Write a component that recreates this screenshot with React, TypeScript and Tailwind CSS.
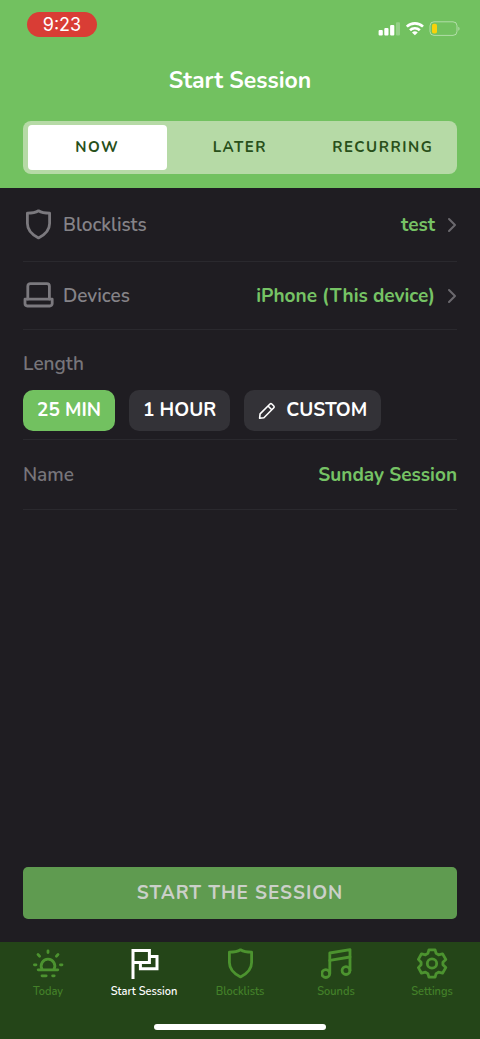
import React, { useState } from "react";
import { ChevronRight } from "lucide-react";

type IconProps = { className?: string };

function Icon({ className = "", children }: IconProps & { children: React.ReactNode }) {
  return (
    <svg
      viewBox="0 0 31 31"
      fill="none"
      stroke="currentColor"
      strokeWidth={2.8}
      strokeLinecap="round"
      strokeLinejoin="round"
      aria-hidden="true"
      className={`w-[31px] h-[31px] shrink-0 ${className}`}
    >
      {children}
    </svg>
  );
}

function ShieldIcon(props: IconProps) {
  return (
    <Icon {...props}>
      <path d="M15.5 1.8C12.5 3.6 8.6 4.2 4.4 4.2V14.5C4.4 20.5 8.8 25.6 15.5 28.9C22.2 25.6 26.6 20.5 26.6 14.5V4.2C22.4 4.2 18.5 3.6 15.5 1.8Z" />
    </Icon>
  );
}

function LaptopIcon(props: IconProps) {
  return (
    <Icon {...props}>
      <path d="M4.8 19V6.2a2.6 2.6 0 0 1 2.6-2.6H23.8a2.6 2.6 0 0 1 2.6 2.6V19" />
      <path d="M2 19.2H29.2V23.6a2.4 2.4 0 0 1-2.4 2.4H4.4A2.4 2.4 0 0 1 2 23.6Z" />
    </Icon>
  );
}

function SunriseIcon(props: IconProps) {
  return (
    <Icon {...props}>
      <path d="M5.2 21.8H24.8" />
      <path d="M9 21.2A6.8 6.8 0 1 1 21 21.2" />
      <path d="M15 2.8V4.6M5 6.6L6.6 8.2M25 6.6L23.4 8.2M1.4 16.8H3M27.4 16.8H29M9 27.8H13.2M19.6 27.8H21.2" />
    </Icon>
  );
}

function FlagIcon({ className = "" }: IconProps) {
  return (
    <svg
      viewBox="0 0 31 31"
      fill="none"
      stroke="currentColor"
      strokeWidth={3}
      strokeLinejoin="miter"
      aria-hidden="true"
      className={`w-[31px] h-[31px] shrink-0 ${className}`}
    >
      <path d="M4 31V2.4H20.4V14.4H4" />
      <path d="M20.4 8.4H28V20.8H11.4V14.4" />
    </svg>
  );
}

function MusicIcon(props: IconProps) {
  return (
    <Icon {...props}>
      <circle cx="4.8" cy="25.6" r="3.9" />
      <circle cx="25" cy="22.6" r="3.9" />
      <path d="M8.8 25.6V5L29 1.6V22.6" />
      <path d="M8.8 12.4L29 9" />
    </Icon>
  );
}

function GearIcon(props: IconProps) {
  return (
    <Icon {...props}>
      <circle cx="15" cy="15.5" r="4.7" />
      <path d="M11.9 1.8H18.1L19.1 5.4L21.5 6.8L25.5 5.8L28.8 11.4L25.9 14.2V16.8L28.8 19.6L25.5 25.2L21.5 24.2L19.1 25.6L18.1 29.2H11.9L10.9 25.6L8.5 24.2L4.5 25.2L1.4 19.6L4.1 16.8V14.2L1.4 11.4L4.5 5.8L8.5 6.8L10.9 5.4Z" />
    </Icon>
  );
}

function PencilIcon() {
  return (
    <svg viewBox="0 0 18 18" fill="none" stroke="currentColor" strokeWidth={1.6} strokeLinejoin="round" aria-hidden="true" className="w-[18px] h-[18px]">
      <path d="M1.6 16.2L2.1 11.9L12 2A1.3 1.3 0 0 1 13.8 2L15.8 4A1.3 1.3 0 0 1 15.8 5.8L5.9 15.7Z" />
      <path d="M10 4L13.8 7.8" />
    </svg>
  );
}

function StatusBar() {
  return (
    <div className="flex items-start justify-between pl-[27px] pr-5 pt-3">
      <div className="w-[70px] h-[25px] rounded-full bg-[#d93d35] text-white text-lg leading-[25px] text-center font-['Inter',sans-serif]">
        9:23
      </div>
      <svg viewBox="0 0 82 16" className="w-[82px] h-4 mt-2" aria-hidden="true">
        <g fill="#fff">
          <rect x="0.6" y="10" width="4.2" height="5.4" rx="1" />
          <rect x="6.3" y="8" width="4.2" height="7.4" rx="1" />
          <rect x="12.1" y="5" width="4.2" height="10.4" rx="1" />
          <rect x="18" y="2.3" width="4" height="13.1" rx="1" opacity="0.25" />
        </g>
        <g fill="none" stroke="#fff" strokeWidth="2.6">
          <path d="M28.8 6.6A11.7 11.7 0 0 1 45 6.6" />
          <path d="M32 10.2A7 7 0 0 1 41.8 10.2" />
        </g>
        <path d="M36.9 15.3L34 12.6A4.2 4.2 0 0 1 39.8 12.6Z" fill="#fff" />
        <rect x="52" y="1.8" width="27" height="13.6" rx="4" fill="none" stroke="#fff" strokeOpacity="0.45" />
        <rect x="54" y="3.8" width="5" height="9.8" rx="1.8" fill="#f8d20a" />
        <path d="M80.3 6.8C82 7.4 82 10.2 80.3 10.8Z" fill="#fff" opacity="0.45" />
      </svg>
    </div>
  );
}

const schedules = ["Now", "Later", "Recurring"];

const tabs = [
  { label: "Today", icon: SunriseIcon },
  { label: "Start Session", icon: FlagIcon },
  { label: "Blocklists", icon: ShieldIcon },
  { label: "Sounds", icon: MusicIcon },
  { label: "Settings", icon: GearIcon }
];

interface PickerRowProps {
  icon: React.ReactNode;
  label: string;
  value: string;
  className: string;
}

function PickerRow({ icon, label, value, className }: PickerRowProps) {
  return (
    <button type="button" className={`w-full flex items-center border-b border-[#2a292e] text-[19px] leading-7 ${className}`}>
      <span className="text-[#7b797e]">{icon}</span>
      <span className="ml-[9px] font-semibold text-[#858388]">{label}</span>
      <span className="ml-auto font-bold text-[#76c365]">{value}</span>
      <ChevronRight className="w-6 h-6 ml-[5px] -mr-[7px] text-[#6b696e]" strokeWidth={2} />
    </button>
  );
}

export default function App() {
  const [schedule, setSchedule] = useState("Now");
  const [length, setLength] = useState("25 min");
  const [name, setName] = useState("Sunday Session");
  const [tab, setTab] = useState("Start Session");

  const chip = (active: boolean) =>
    `h-[41px] px-[14px] rounded-[10px] text-[19px] font-bold uppercase text-white flex items-center gap-2.5 ${
      active ? "bg-[#72c160]" : "bg-[#333237]"
    }`;

  return (
    <div className="min-h-screen flex flex-col bg-[#1f1d22] font-['Nunito','Open_Sans',sans-serif]">
      <header className="bg-[#72c160] pb-[14px]">
        <StatusBar />
        <h1 className="mt-7 text-[23px] leading-8 font-bold text-white text-center">Start Session</h1>
        <div className="mx-[23px] mt-6 px-[5px] py-1 h-[53px] rounded-lg bg-[#b6daa6] grid grid-cols-3 gap-1">
          {schedules.map((item) => (
            <button
              key={item}
              type="button"
              aria-pressed={schedule === item}
              onClick={() => setSchedule(item)}
              className={`rounded text-[15px] font-bold uppercase tracking-widest text-[#28501a] ${
                schedule === item ? "bg-white" : ""
              }`}
            >
              {item}
            </button>
          ))}
        </div>
      </header>

      <main className="flex-1 flex flex-col px-[23px] pb-[23px]">
        <PickerRow icon={<ShieldIcon />} label="Blocklists" value="test" className="h-[74px]" />
        <PickerRow icon={<LaptopIcon />} label="Devices" value="iPhone (This device)" className="h-[68px]" />

        <section className="pt-5 pb-2 border-b border-[#2a292e]">
          <h2 className="text-[19px] leading-7 font-semibold text-[#77757a]">Length</h2>
          <div className="mt-3 flex gap-[14px]">
            <button type="button" className={chip(length === "25 min")} onClick={() => setLength("25 min")}>
              25 min
            </button>
            <button type="button" className={chip(length === "1 hour")} onClick={() => setLength("1 hour")}>
              1 hour
            </button>
            <button type="button" className={chip(length === "custom")} onClick={() => setLength("custom")}>
              <PencilIcon />
              Custom
            </button>
          </div>
        </section>

        <div className="h-[70px] flex items-center border-b border-[#2a292e] text-[19px] leading-7 font-semibold">
          <label htmlFor="session-name" className="text-[#77757a]">Name</label>
          <input
            id="session-name"
            value={name}
            onChange={(e) => setName(e.target.value)}
            className="flex-1 min-w-0 bg-transparent text-right font-bold text-[#76c365] outline-none"
          />
        </div>

        <button
          type="button"
          className="mt-auto h-[52px] rounded-[5px] bg-[#5f9b50] text-[19px] font-bold uppercase tracking-wider text-[#cbd0c9]"
        >
          Start the session
        </button>
      </main>

      <nav className="bg-[#244518] pt-[6px] pb-[9px]">
        <div className="grid grid-cols-5">
          {tabs.map(({ label, icon: TabIcon }) => (
            <button
              key={label}
              type="button"
              onClick={() => setTab(label)}
              className={`flex flex-col items-center gap-[5px] whitespace-nowrap text-[11px] leading-4 font-semibold ${
                tab === label ? "text-white" : "text-[#438029]"
              }`}
            >
              <TabIcon className={tab === label ? "" : "text-[#4c932f]"} />
              {label}
            </button>
          ))}
        </div>
        <div className="mt-6 mx-auto w-[172px] h-[6px] rounded-full bg-white" />
      </nav>
    </div>
  );
}
